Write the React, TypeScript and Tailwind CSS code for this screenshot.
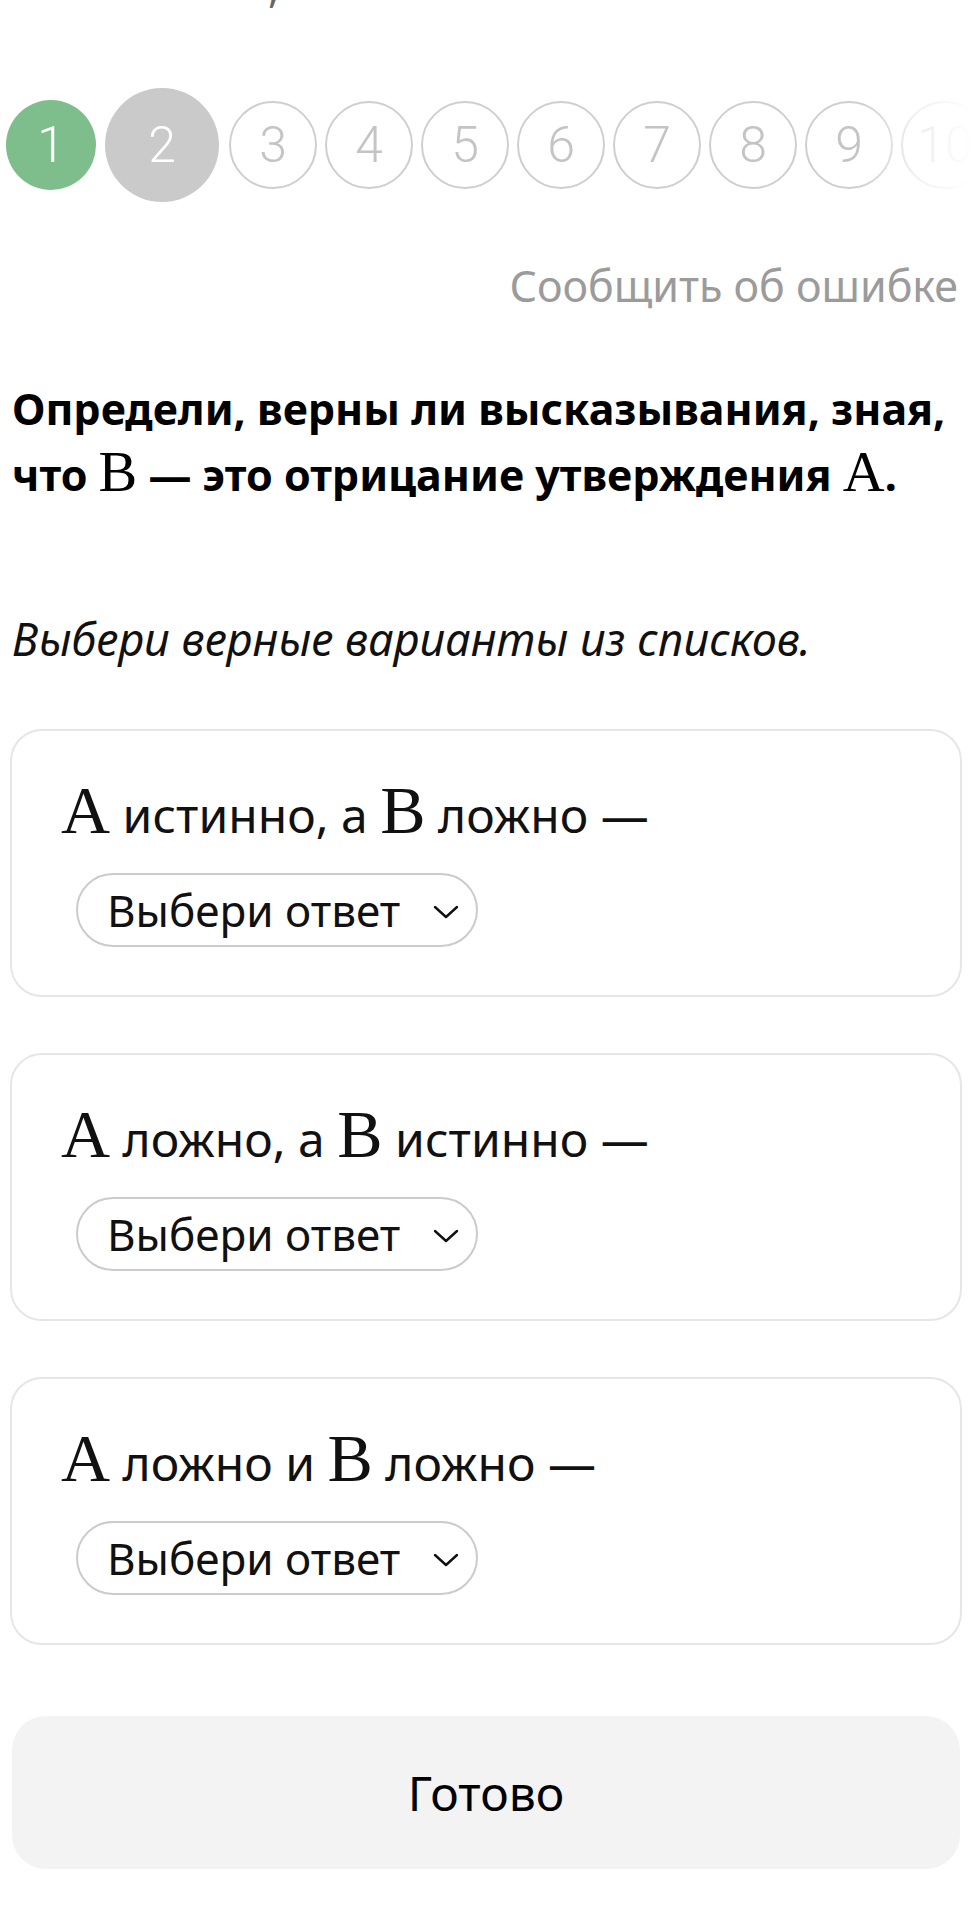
import React from "react";

type StepState = "done" | "current" | "todo";

const stepLook: Record<StepState, string> = {
  done: "h-[90px] w-[90px] bg-[#7dbe8c] text-white",
  current: "h-[114px] w-[114px] bg-[#cacaca] text-white",
  todo: "h-[88px] w-[88px] border-2 border-[#cfcfcf] text-[#c4c4c4]",
};

function Step({ n, state, ml }: { n: number; state: StepState; ml: string }) {
  return (
    <div
      className={`${ml} ${stepLook[state]} flex shrink-0 items-center justify-center rounded-full font-['Roboto',sans-serif] text-[50px] font-light`}
    >
      {n}
    </div>
  );
}

function Chevron() {
  return (
    <svg width="28" height="16" viewBox="0 0 28 16" fill="none" className="mt-[4px] shrink-0">
      <path d="M3 3 L14 13 L25 3" stroke="#111" strokeWidth="2.4" strokeLinecap="round" strokeLinejoin="round" />
    </svg>
  );
}

function Pick() {
  return (
    <div className="ml-[15px] mt-[26px] flex h-[74px] w-[402px] items-center rounded-full border-2 border-[#cbcbcb] pl-[29px] pr-[16px]">
      <span className="flex-1 text-[44px] leading-none text-[#111]">Выбери ответ</span>
      <Chevron />
    </div>
  );
}

function M({ c, big }: { c: string; big?: boolean }) {
  return (
    <span className={`font-['Liberation_Serif','DejaVu_Serif',serif] font-normal leading-none ${big ? "text-[68px]" : "text-[58px]"}`}>
      {c}
    </span>
  );
}

function Statement({ children }: { children: React.ReactNode }) {
  return (
    <div className="rounded-[32px] border-2 border-[#e6e6e6] pb-[48px] pl-[49px] pt-[45px]">
      <div className="text-[48px] leading-[64px] text-[#111]">{children}</div>
      <Pick />
    </div>
  );
}

export default function App() {
  const steps = [3, 4, 5, 6, 7, 8, 9, 10];
  return (
    <div className="min-h-[1916px] w-[972px] bg-white font-['Noto_Sans','Open_Sans',sans-serif]">
      {/* tail of the line above, cut by the top edge */}
      <div className="relative h-[14px] overflow-hidden">
        <span className="absolute left-[268px] top-[-34px] text-[42px] leading-none text-[#666]">,</span>
      </div>

      {/* question steps */}
      <div className="relative mt-[74px] flex h-[114px] items-center overflow-hidden">
        <Step n={1} state="done" ml="ml-[6px]" />
        <Step n={2} state="current" ml="ml-[9px]" />
        {steps.map((n, i) => (
          <Step key={n} n={n} state="todo" ml={i === 0 ? "ml-[10px]" : "ml-[8px]"} />
        ))}
        <div className="pointer-events-none absolute right-0 top-0 h-full w-[110px] bg-gradient-to-r from-white/0 via-white/70 to-white" />
      </div>

      <div className="mt-[56px] pr-[14px] text-right text-[43px] leading-[56px] text-[#9b9b9b]">
        Сообщить об ошибке
      </div>

      <div className="mt-[62px] px-[12px] text-[43px] font-bold leading-[66px] text-black">
        Определи, верны ли высказывания, зная, что <M c="B" /> — это отрицание утверждения <M c="A" />.
      </div>

      <div className="mt-[101px] px-[12px] text-[45px] italic leading-[60px] text-[#111]">
        Выбери верные варианты из списков.
      </div>

      <div className="mt-[60px] flex flex-col gap-[56px] px-[10px]">
        <Statement>
          <M c="A" big /> истинно, а <M c="B" big /> ложно —
        </Statement>
        <Statement>
          <M c="A" big /> ложно, а <M c="B" big /> истинно —
        </Statement>
        <Statement>
          <M c="A" big /> ложно и <M c="B" big /> ложно —
        </Statement>
      </div>

      <div className="mx-[12px] mt-[71px] flex h-[153px] items-center justify-center rounded-[34px] bg-[#f3f3f3]">
        <span className="text-[48px] text-black">Готово</span>
      </div>
    </div>
  );
}
